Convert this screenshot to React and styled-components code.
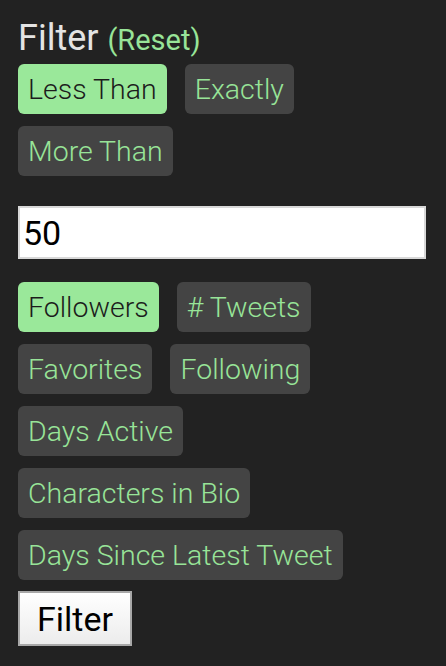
import React, { useState } from 'react';
import styled, { createGlobalStyle } from 'styled-components';

const GlobalStyle = createGlobalStyle`
  html, body {
    margin: 0;
    padding: 0;
    background: #222222;
  }
  body {
    font-family: Roboto, "Liberation Sans", sans-serif;
  }
`;

const comparisons = ['Less Than', 'Exactly', 'More Than'];
const fields = [
  'Followers',
  '# Tweets',
  'Favorites',
  'Following',
  'Days Active',
  'Characters in Bio',
  'Days Since Latest Tweet',
];

const App = () => {
  const [comparison, setComparison] = useState('Less Than');
  const [field, setField] = useState('Followers');
  const [value, setValue] = useState('50');

  return (
    <>
      <GlobalStyle />
      <Panel>
        <Heading>
          Filter <ResetLink>(Reset)</ResetLink>
        </Heading>

        <ChipGroup>
          {comparisons.map((c) => (
            <Chip key={c} active={c === comparison} onClick={() => setComparison(c)}>
              {c}
            </Chip>
          ))}
        </ChipGroup>

        <ValueInput value={value} onChange={(e) => setValue(e.target.value)} />

        <ChipGroup>
          {fields.map((f) => (
            <Chip key={f} active={f === field} onClick={() => setField(f)}>
              {f}
            </Chip>
          ))}
        </ChipGroup>

        <SubmitButton>Filter</SubmitButton>
      </Panel>
    </>
  );
};

const Panel = styled.div`
  box-sizing: border-box;
  width: 446px;
  min-height: 666px;
  padding: 18px 20px 0 18px;
  background: #222222;
  display: flex;
  flex-direction: column;
  align-items: flex-start;
`;

const Heading = styled.h1`
  margin: 0 0 4px 0;
  font-family: Roboto, sans-serif;
  font-weight: 400;
  font-size: 36px;
  line-height: 40px;
  color: #e4e4e4;
`;

const ResetLink = styled.span`
  font-size: 29px;
  color: #98e498;
  cursor: pointer;
`;

const ChipGroup = styled.div`
  display: flex;
  flex-wrap: wrap;
  gap: 12px 18px;
  width: 100%;
`;

const Chip = styled.div`
  box-sizing: border-box;
  height: 50px;
  padding: 0 10px;
  display: flex;
  align-items: center;
  border-radius: 6px;
  font-family: Roboto, sans-serif;
  font-weight: 300;
  font-size: 28.5px;
  white-space: nowrap;
  cursor: pointer;
  background: ${(p) => (p.active ? '#9ae89a' : '#444444')};
  color: ${(p) => (p.active ? '#1c1c1c' : '#98e498')};
`;

const ValueInput = styled.input`
  box-sizing: border-box;
  width: 100%;
  height: 53px;
  margin: 30px 0 23px 0;
  padding: 0 3px;
  border: 2px solid #d8d8d8;
  background: #ffffff;
  font-family: Roboto, sans-serif;
  font-size: 34px;
  color: #000000;
  outline: none;
`;

const SubmitButton = styled.button`
  box-sizing: border-box;
  margin-top: 11px;
  height: 55px;
  padding: 0 17px;
  border: 2px solid #a8a8a8;
  border-radius: 0;
  background: linear-gradient(#ffffff, #ececec);
  font-family: Roboto, sans-serif;
  font-size: 34px;
  color: #000000;
  cursor: pointer;
`;

export default App;
